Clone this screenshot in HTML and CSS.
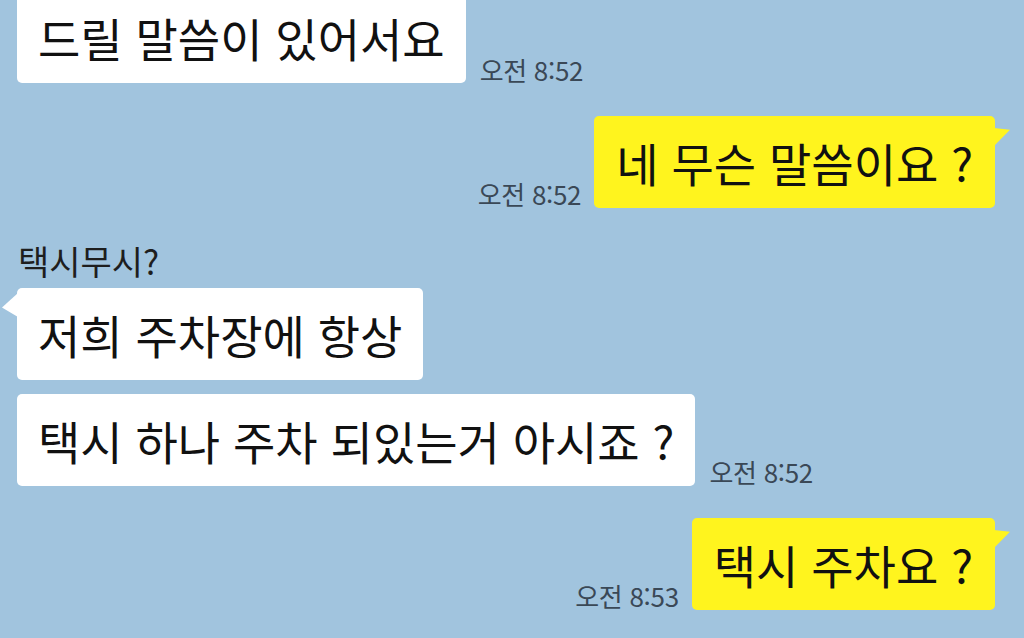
FILE: index.html
```html
<!DOCTYPE html>
<html lang="ko">
<head>
<meta charset="utf-8">
<title>Chat</title>
<link rel="stylesheet" href="styles.css">
</head>
<body>
<div class="chat">
  <div class="row in first">
    <div class="bubble white">드릴 말씀이 있어서요</div>
    <span class="time">오전 8:52</span>
  </div>
  <div class="row out gap-a">
    <span class="time">오전 8:52</span>
    <div class="bubble yellow tail-right">네 무슨 말씀이요 ?</div>
  </div>
  <div class="name">택시무시?</div>
  <div class="row in">
    <div class="bubble white tail-left">저희 주차장에 항상</div>
  </div>
  <div class="row in gap-b">
    <div class="bubble white">택시 하나 주차 되있는거 아시죠 ?</div>
    <span class="time">오전 8:52</span>
  </div>
  <div class="row out gap-c">
    <span class="time">오전 8:53</span>
    <div class="bubble yellow tail-right">택시 주차요 ?</div>
  </div>
</div>
</body>
</html>
```
FILE: styles.css
```css
html, body {
  margin: 0;
  padding: 0;
  width: 1024px;
  height: 638px;
  overflow: hidden;
  background: #a1c4de;
}

.chat {
  display: flex;
  flex-direction: column;
  padding: 0 29px 0 17px;
  font-family: "Noto Sans CJK KR", "Noto Sans", sans-serif;
}

.row {
  display: flex;
  align-items: flex-end;
  gap: 14px;
}

.row.out {
  justify-content: flex-end;
  gap: 13px;
}

.row.first { margin-top: -9px; }
.gap-a { margin-top: 33px; }
.gap-b { margin-top: 14px; }
.gap-c { margin-top: 32px; }

.bubble {
  position: relative;
  height: 92px;
  box-sizing: border-box;
  padding: 0 21px;
  display: flex;
  align-items: center;
  border-radius: 5px;
  font-size: 46px;
  line-height: 1;
  color: #111;
  white-space: nowrap;
}

.white { background: #ffffff; }
.yellow { background: #fff41e; padding: 0 22px; }

.tail-right::after {
  content: "";
  position: absolute;
  top: 12px;
  right: -15px;
  width: 16px;
  height: 18px;
  background: #fff41e;
  clip-path: polygon(0 0, 100% 10%, 0 100%);
}

.tail-left::before {
  content: "";
  position: absolute;
  top: 5px;
  left: -15px;
  width: 16px;
  height: 24px;
  background: #ffffff;
  clip-path: polygon(100% 0, 0 60%, 100% 100%);
}

.time {
  font-size: 26px;
  line-height: 26px;
  color: #3a4856;
  margin-bottom: 1px;
  white-space: nowrap;
  letter-spacing: -0.3px;
}

.row.first .time { margin-bottom: 0; }

.name {
  margin-top: 33px;
  margin-bottom: 7px;
  margin-left: 1px;
  font-size: 34px;
  line-height: 40px;
  color: #1e1e1e;
}
```
